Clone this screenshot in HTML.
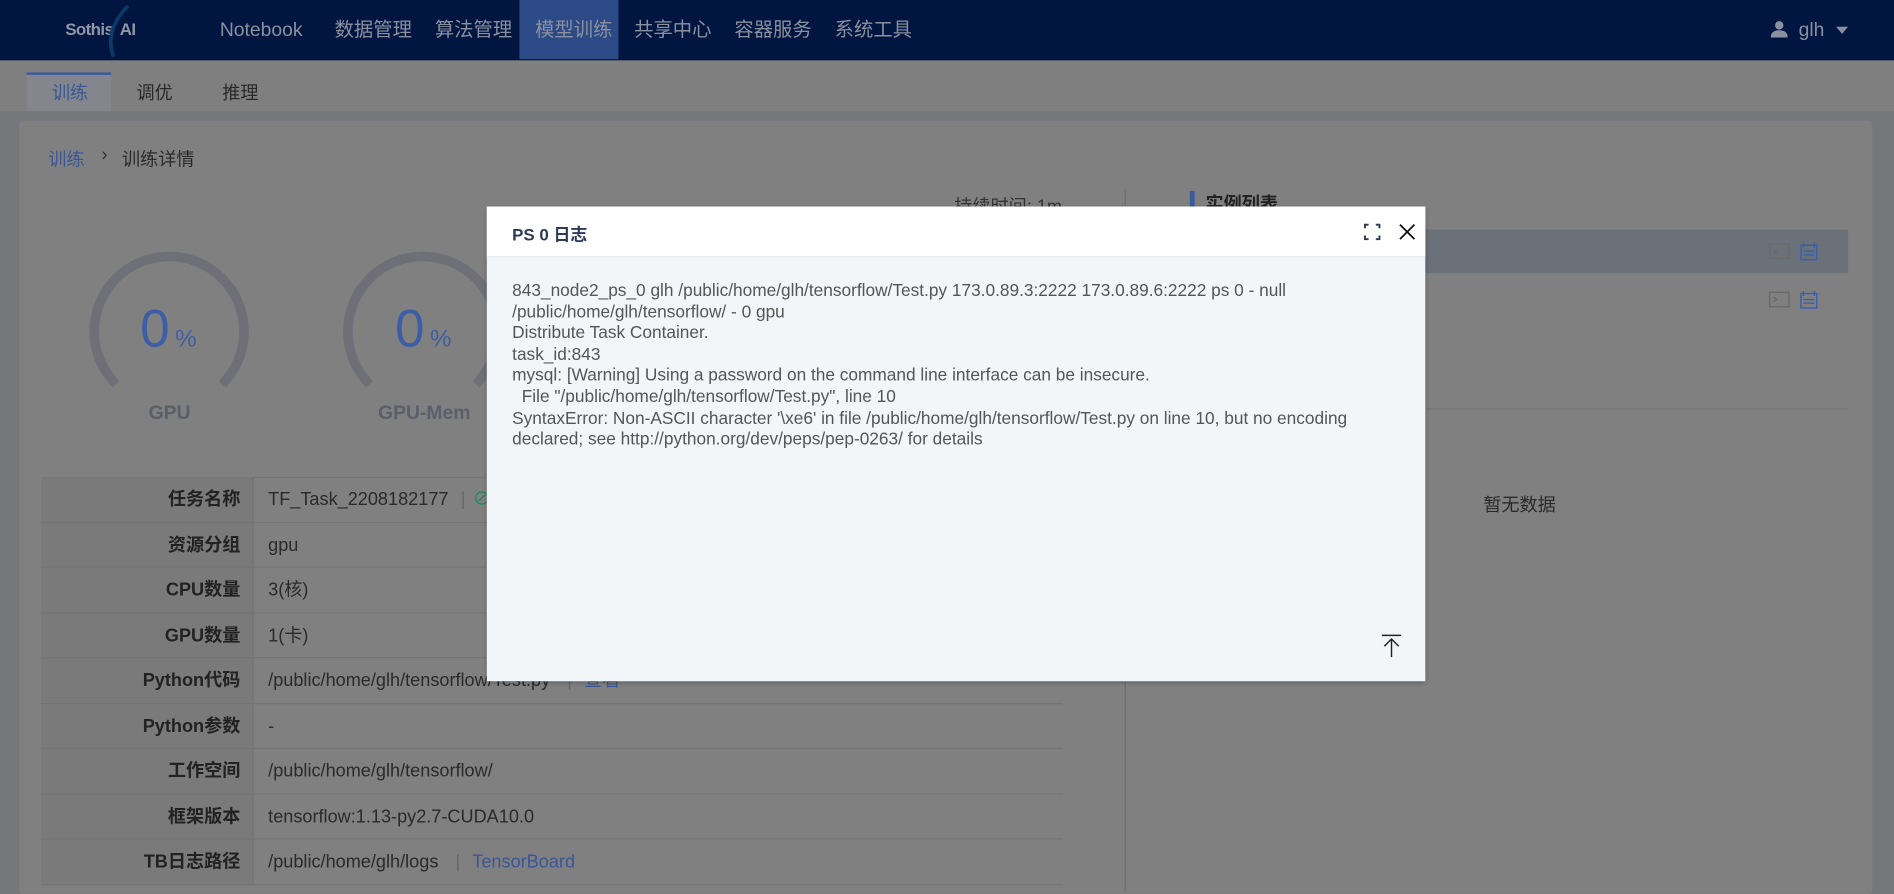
<!DOCTYPE html>
<html><head><meta charset="utf-8"><style>
*{margin:0;padding:0;box-sizing:border-box}
html,body{width:1894px;height:884px;overflow:hidden;background:#76777a}
#w{position:absolute;left:0;top:0;width:1568px;height:732px;transform:scale(1.20791);transform-origin:0 0;font-family:"Liberation Sans","Noto Sans CJK SC",sans-serif;background:#76777a}
.a{position:absolute}
.nav{left:0;top:0;width:1568px;height:50px;background:#00153f}
.ni{top:2px;height:48px;line-height:48px;font-size:16px;color:#8a90a0}
.row{left:34px;width:846px;height:37.5px;border-bottom:1px solid #737373;font-size:15px;line-height:37px}
.lb{position:absolute;left:0;width:176px;height:100%;background:#7a7a7a;border-right:1px solid #737373;text-align:right;padding-right:10px;font-weight:bold;color:#222}
.vl{position:absolute;left:188px;color:#2a2a2a}
.ml{font-size:14.3px;color:#555;line-height:17.6px;white-space:pre}
</style></head><body><div id="w">
<div class="a nav"></div>
<div class="a" style="left:54px;top:16px;font-size:14px;font-weight:bold;color:#8f96a6;letter-spacing:-0.5px">Sothis <span style="margin-left:2px">AI</span></div>
<svg class="a" style="left:80px;top:3px" width="30" height="46"><path d="M26 2 Q6 22 14 44" stroke="#0a3a6a" stroke-width="3" fill="none"/></svg>
<div class="a ni" style="left:182px">Notebook</div>
<div class="a ni" style="left:277px">数据管理</div>
<div class="a ni" style="left:360px">算法管理</div>
<div class="a" style="left:430px;top:0;width:82px;height:49px;background:#2c4a85"></div>
<div class="a ni" style="left:443px">模型训练</div>
<div class="a ni" style="left:525px">共享中心</div>
<div class="a ni" style="left:608px">容器服务</div>
<div class="a ni" style="left:691px">系统工具</div>
<svg class="a" style="left:1466px;top:17px" width="14" height="14"><circle cx="7" cy="4" r="3.5" fill="#8a90a0"/><path d="M0 14 Q0 8 7 8 Q14 8 14 14Z" fill="#8a90a0"/></svg>
<div class="a ni" style="left:1489px;font-size:16px">glh</div>
<svg class="a" style="left:1520px;top:22px" width="10" height="6"><path d="M0 0H10L5 6Z" fill="#8a90a0"/></svg>
<div class="a" style="left:0;top:50px;width:1568px;height:42px;background:#7f7f7f"></div>
<div class="a" style="left:22px;top:60px;width:70px;height:32px;background:#83878d;border-top:2px solid #3a5a9e"></div>
<div class="a" style="left:43px;top:66px;font-size:15px;color:#3a5694">训练</div>
<div class="a" style="left:113px;top:66px;font-size:15px;color:#2a2a2a">调优</div>
<div class="a" style="left:184px;top:66px;font-size:15px;color:#2a2a2a">推理</div>
<div class="a" style="left:16px;top:100px;width:1534px;height:640px;background:#808080;border-radius:3px"></div>
<div class="a" style="left:40px;top:121px;font-size:15px;color:#3a5694">训练</div>
<div class="a" style="left:84px;top:120px;font-size:15px;color:#333">›</div>
<div class="a" style="left:101px;top:121px;font-size:15px;color:#2a2a2a">训练详情</div>
<div class="a" style="left:790px;top:160px;font-size:15px;color:#333">持续时间: 1m</div>
<svg class="a" style="left:60px;top:184px" width="400" height="160">
<path d="M36 134 A62 62 0 1 1 124 134" stroke="#6f7077" stroke-width="8" fill="none"/>
<path d="M246 134 A62 62 0 1 1 334 134" stroke="#6f7077" stroke-width="8" fill="none"/>
</svg>
<div class="a" style="left:116px;top:248px;font-size:44px;color:#3d5ea6">0</div>
<div class="a" style="left:145px;top:270px;font-size:20px;color:#3d5ea6">%</div>
<div class="a" style="left:327px;top:248px;font-size:44px;color:#3d5ea6">0</div>
<div class="a" style="left:356px;top:270px;font-size:20px;color:#3d5ea6">%</div>
<div class="a" style="left:123px;top:334px;font-size:16px;font-weight:bold;color:#5a5f6b">GPU</div>
<div class="a" style="left:313px;top:334px;font-size:16px;font-weight:bold;color:#5a5f6b">GPU-Mem</div>
<div class="a" style="left:34px;top:395px;width:846px;border-top:1px solid #737373"></div>
<div class="a row" style="top:395px"><div class="lb">任务名称</div><div class="vl">TF_Task_2208182177 <span style="color:#666;margin:0 6px">|</span><span style="color:#1a8a5a">⊘</span></div></div>
<div class="a row" style="top:432.5px"><div class="lb">资源分组</div><div class="vl">gpu</div></div>
<div class="a row" style="top:470px"><div class="lb">CPU数量</div><div class="vl">3(核)</div></div>
<div class="a row" style="top:507.5px"><div class="lb">GPU数量</div><div class="vl">1(卡)</div></div>
<div class="a row" style="top:545px"><div class="lb">Python代码</div><div class="vl">/public/home/glh/tensorflow/Test.py <span style="color:#666;margin:0 10px">|</span><span style="color:#3a5694">查看</span></div></div>
<div class="a row" style="top:582.5px"><div class="lb">Python参数</div><div class="vl">-</div></div>
<div class="a row" style="top:620px"><div class="lb">工作空间</div><div class="vl">/public/home/glh/tensorflow/</div></div>
<div class="a row" style="top:657.5px"><div class="lb">框架版本</div><div class="vl">tensorflow:1.13-py2.7-CUDA10.0</div></div>
<div class="a row" style="top:695px"><div class="lb">TB日志路径</div><div class="vl">/public/home/glh/logs <span style="color:#666;margin:0 10px">|</span><span style="color:#3a5694">TensorBoard</span></div></div>
<div class="a" style="left:931px;top:157px;width:1px;height:580px;background:#6e6e6e"></div>
<div class="a" style="left:985px;top:158px;width:4px;height:18px;background:#3a5a9e"></div>
<div class="a" style="left:998px;top:158px;font-size:15px;font-weight:bold;color:#222">实例列表</div>
<div class="a" style="left:985px;top:190px;width:545px;height:36px;background:#6b7178"></div>
<svg class="a" style="left:1464px;top:201px" width="60" height="55"><g fill="none" stroke-width="1.2"><rect x="1" y="1" width="16" height="12" stroke="#6a6a6a"/><path d="M4 5l3 2-3 2" stroke="#6a6a6a"/><rect x="27" y="2" width="13" height="12" stroke="#3a5fb0"/><path d="M29 0v4M38 0v4M29 7h9M29 10h9" stroke="#3a5fb0"/>
<g transform="translate(0,40)"><rect x="1" y="1" width="16" height="12" stroke="#6a6a6a"/><path d="M4 5l3 2-3 2" stroke="#6a6a6a"/><rect x="27" y="2" width="13" height="12" stroke="#3a5fb0"/><path d="M29 0v4M38 0v4M29 7h9M29 10h9" stroke="#3a5fb0"/></g></g></svg>
<div class="a" style="left:985px;top:338px;width:545px;height:1px;background:#747474"></div>
<div class="a" style="left:1228px;top:407px;font-size:15px;color:#2a2a2a">暂无数据</div>
<div class="a" style="left:403px;top:171px;width:777px;height:393px;background:#f3f6f9;box-shadow:0 1px 4px rgba(0,0,0,.3)"></div>
<div class="a" style="left:403px;top:171px;width:777px;height:42px;background:#fff;border-bottom:1px solid #e6e9ee"></div>
<div class="a" style="left:424px;top:184px;font-size:14px;font-weight:bold;color:#2c3a55">PS 0 日志</div>
<svg class="a" style="left:1129px;top:185px" width="14" height="14"><path d="M1 4V1H4M10 1H13V4M13 10V13H10M4 13H1V10" stroke="#2c3a55" stroke-width="1.6" fill="none"/></svg>
<svg class="a" style="left:1158px;top:185px" width="14" height="14"><path d="M1 1L13 13M13 1L1 13" stroke="#111" stroke-width="1.5"/></svg>
<div class="a ml" style="left:424px;top:233px">843_node2_ps_0 glh /public/home/glh/tensorflow/Test.py 173.0.89.3:2222 173.0.89.6:2222 ps 0 - null
/public/home/glh/tensorflow/ - 0 gpu
Distribute Task Container.
task_id:843
mysql: [Warning] Using a password on the command line interface can be insecure.
  File "/public/home/glh/tensorflow/Test.py", line 10
SyntaxError: Non-ASCII character '\xe6' in file /public/home/glh/tensorflow/Test.py on line 10, but no encoding
declared; see http://python.org/dev/peps/pep-0263/ for details</div>
<svg class="a" style="left:1143px;top:525px" width="18" height="20"><path d="M1 1H17M9 4V19M3 10L9 4L15 10" stroke="#222" stroke-width="1.2" fill="none"/></svg>
</div></body></html>
